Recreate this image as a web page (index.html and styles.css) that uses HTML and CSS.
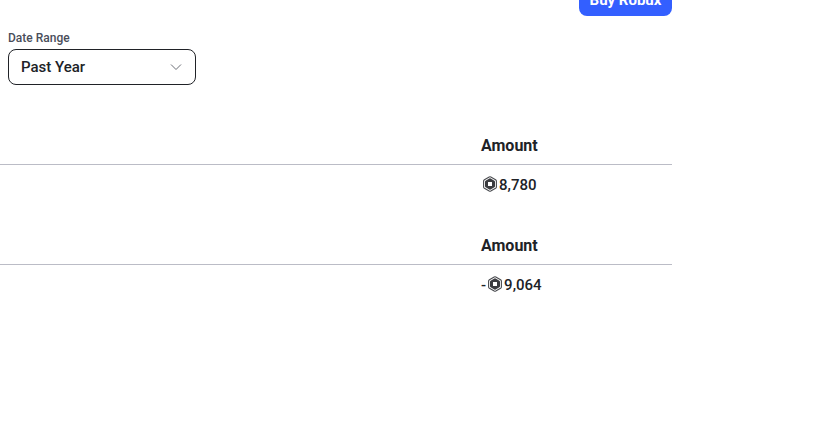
FILE: index.html
```html
<!DOCTYPE html>
<html lang="en">

<head>
    <meta charset="UTF-8">
    <meta name="viewport" content="width=device-width, initial-scale=1.0">
    <title>My Transactions</title>

    <link rel="stylesheet" href="styles.css">
</head>

<body>
    <!-- Robux icon, used in both tables -->
    <svg class="sprite" aria-hidden="true">
        <symbol id="robux" viewBox="0 0 16 16">
            <path d="M7.2 0.9 Q8 0.5 8.8 0.9 L13.6 3.7 Q14.4 4.2 14.4 5 V11 Q14.4 11.8 13.6 12.3 L8.8 15.1 Q8 15.5 7.2 15.1 L2.4 12.3 Q1.6 11.8 1.6 11 V5 Q1.6 4.2 2.4 3.7 Z" fill="none" stroke="#4a4c50" stroke-width="1.1" />
            <path fill="#3a3b3f" fill-rule="evenodd" d="M7.4 2.5 Q8 2.2 8.6 2.5 L12.4 4.7 Q13 5.1 13 5.8 V10.2 Q13 10.9 12.4 11.3 L8.6 13.5 Q8 13.8 7.4 13.5 L3.6 11.3 Q3 10.9 3 10.2 V5.8 Q3 5.1 3.6 4.7 Z M6 6 V10 H10 V6 Z" />
        </symbol>
    </svg>

    <main class="content">
        <header class="page-header">
            <button type="button" class="buy-button">Buy Robux</button>
        </header>

        <div class="form-control">
            <label for="date-range">Date Range</label>
            <div class="select-wrap">
                <select id="date-range">
                    <option>Past Day</option>
                    <option>Past Week</option>
                    <option>Past Month</option>
                    <option selected>Past Year</option>
                </select>
                <svg class="chevron" viewBox="0 0 12 8" aria-hidden="true">
                    <path d="M1 1.5 L6 6.5 L11 1.5" />
                </svg>
            </div>
        </div>

        <table class="summary">
            <thead>
                <tr>
                    <td></td>
                    <th class="amount">Amount</th>
                </tr>
            </thead>
            <tbody>
                <tr>
                    <td></td>
                    <td class="amount"><span class="robux-value incoming"><svg class="robux-icon"><use href="#robux" /></svg>8,780</span></td>
                </tr>
            </tbody>
        </table>

        <table class="summary">
            <thead>
                <tr>
                    <td></td>
                    <th class="amount">Amount</th>
                </tr>
            </thead>
            <tbody>
                <tr>
                    <td></td>
                    <td class="amount"><span class="robux-value">-<svg class="robux-icon"><use href="#robux" /></svg>9,064</span></td>
                </tr>
            </tbody>
        </table>
    </main>
</body>

</html>
```

FILE: styles.css
```css
body {
    background-color: #fff;
    color: #202227;
    font-family: Roboto, "Noto Sans", sans-serif;
    font-size: 15px;
    font-weight: 500;
    line-height: 20px;
    margin: 0;
}

.sprite {
    display: none;
}

.content {
    margin-right: 154px;
}

/* the page is scrolled so that only the foot of the header shows */
.page-header {
    display: flex;
    justify-content: flex-end;
    margin-top: -20px;
}

.buy-button {
    background-color: #335fff;
    color: #fff;
    border: none;
    border-radius: 8px;
    font-family: inherit;
    font-size: 15px;
    font-weight: 700;
    line-height: 20px;
    height: 36px;
    padding: 4px 8px 0;
    min-width: 93px;
    cursor: pointer;
}

.form-control {
    margin: 14px 8px 0;
}

.form-control label {
    display: block;
    color: #494d5a;
    font-size: 12px;
    line-height: 16px;
    margin-bottom: 3px;
}

.select-wrap {
    display: grid;
    align-items: center;
    width: 188px;
}

.select-wrap select,
.chevron {
    grid-area: 1 / 1;
}

.select-wrap select {
    appearance: none;
    background-color: #fff;
    border: 1px solid #202227;
    border-radius: 8px;
    color: inherit;
    font: inherit;
    width: 100%;
    height: 36px;
    padding: 0 32px 0 12px;
}

.chevron {
    justify-self: end;
    width: 12px;
    height: 8px;
    margin-right: 14px;
    fill: none;
    stroke: #6b6e76;
    pointer-events: none;
}

.summary {
    border-collapse: collapse;
    table-layout: fixed;
    width: 100%;
    margin-top: 41px;
}

.summary th,
.summary td {
    height: 20px;
    padding: 10px 0 8px;
    text-align: left;
}

.summary thead {
    border-bottom: 1px solid #bbbcc6;
}

.summary th {
    font-size: 16px;
    font-weight: 700;
}

.summary .amount {
    width: 191px;
    padding-left: 1px;
}

.summary + .summary {
    margin-top: 23px;
}

.robux-value {
    display: flex;
    gap: 1px;
}

.incoming {
    padding-left: 1px;
}

.robux-icon {
    width: 16px;
    height: 16px;
    margin-top: 1px;
}
```
